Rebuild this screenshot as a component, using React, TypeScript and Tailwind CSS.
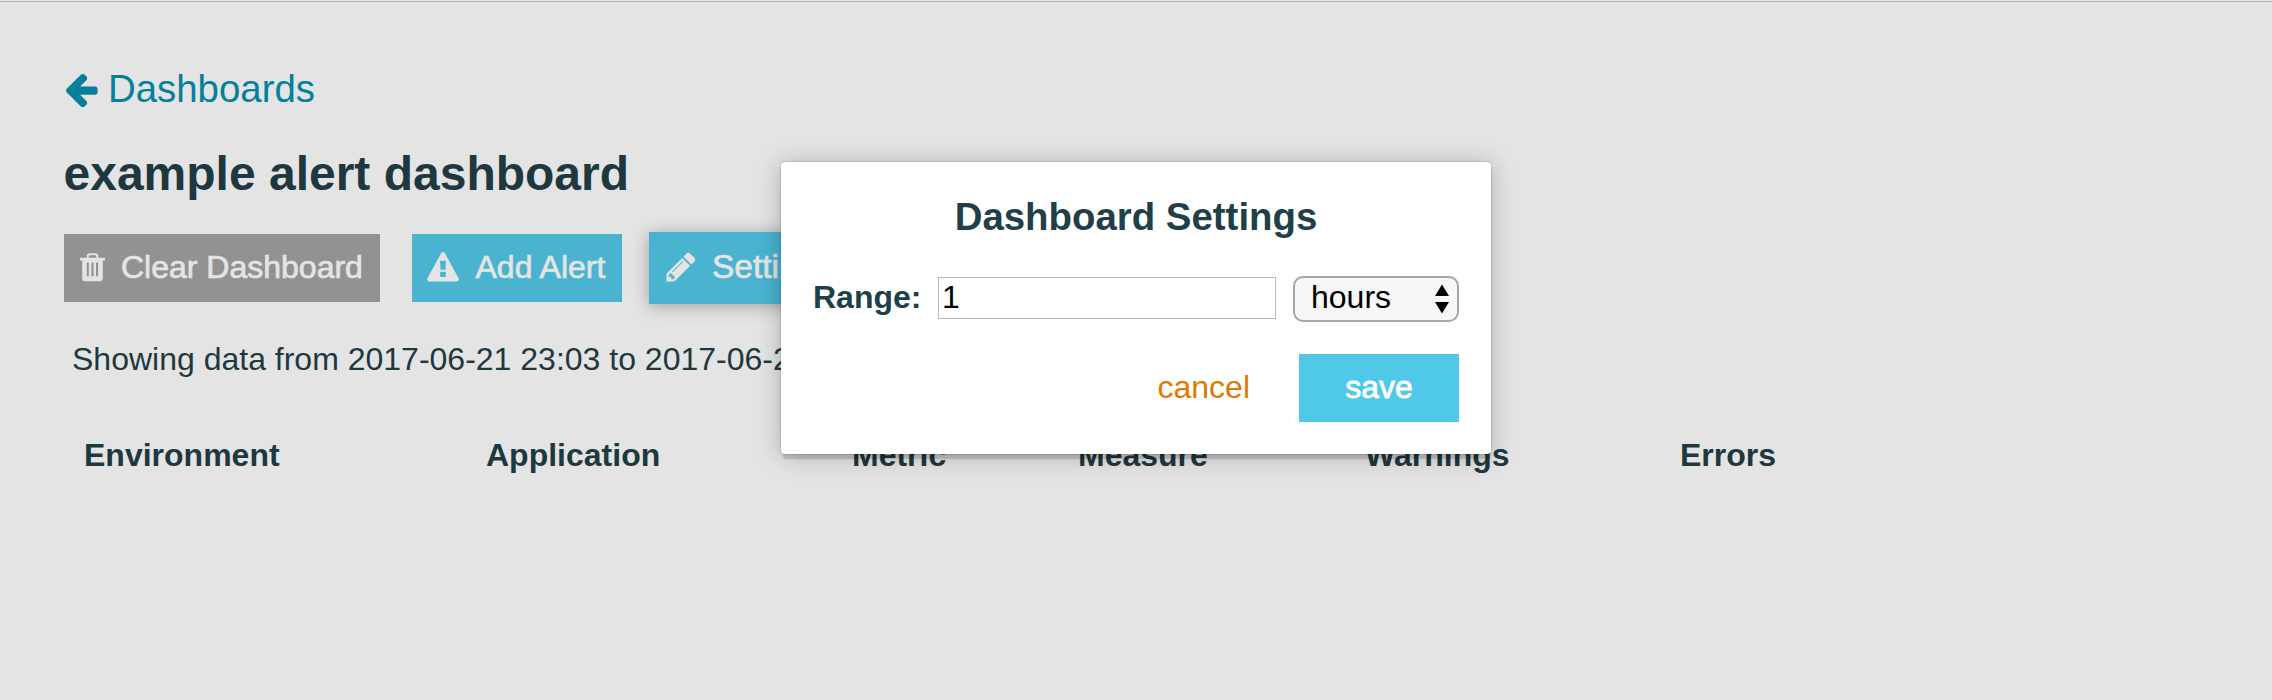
import React from "react";

function Icon({ d, className, viewBox = "0 0 1792 1792" }: { d: string; className: string; viewBox?: string }) {
  return (
    <svg viewBox={viewBox} className={className} fill="currentColor" fillRule="evenodd">
      <path d={d} />
    </svg>
  );
}

const ARROW_LEFT =
  "M1664 896v128q0 53-32.5 90.5t-84.5 37.5h-704l293 294q38 36 38 90t-38 90l-75 76q-37 37-90 37-52 0-91-37l-651-652q-37-37-37-90 0-52 37-91l651-650q38-38 91-38 52 0 90 38l75 74q38 38 38 91t-38 91l-293 293h704q52 0 84.5 37.5t32.5 90.5z";
const TRASH =
  "M0.400 4.700H6.700V3.200Q6.700 0.200 9.700 0.200H15.300Q18.300 0.200 18.300 3.200V4.700H24.600Q25 4.700 25 5.100V7.200Q25 7.600 24.600 7.600H22.800V25.200Q22.800 28.200 19.800 28.200H5.200Q2.200 28.200 2.200 25.200V7.600H0.400Q0 7.600 0 7.200V5.100Q0 4.700 0.400 4.700ZM8.700 4.700H16.300V3.300Q16.300 2.200 15.200 2.200H9.800Q8.700 2.200 8.700 3.300ZM6.800 9.500V23.300H8.800V9.500ZM11.400 9.500V23.300H13.600V9.500ZM16 9.500V23.300H18.100V9.500Z";
const WARNING =
  "M17.800 1.100L31.600 26.300Q32 27.200 31.600 28.200Q31 29.600 29.500 29.600H2.500Q1 29.600 0.400 28.200Q0 27.200 0.400 26.300L14.200 1.100Q15 0 16 0T17.800 1.100ZM13.400 8.800Q13.100 8.800 13.100 9.300L13.500 17.200Q13.500 17.700 14 17.700H18Q18.500 17.700 18.500 17.200L18.900 9.300Q18.900 8.800 18.600 8.800ZM13.700 19.700Q13.200 19.700 13.200 20.200V24.400Q13.200 24.900 13.700 24.900H18.300Q18.800 24.900 18.800 24.400V20.200Q18.800 19.700 18.300 19.700Z";
const PENCIL =
  "M491 1536l91-91-235-235-91 91v107h128v128h107zm523-928q0-22-22-22-10 0-17 7l-542 542q-7 7-7 17 0 22 22 22 10 0 17-7l542-542q7-7 7-17zm-54-192l416 416-832 832h-416v-416zm683 96q0 53-37 90l-166 166-416-416 166-165q36-38 90-38 53 0 91 38l235 234q37 39 37 91z";

function SettingsDialog() {
  return (
    <div
      role="dialog"
      className="absolute left-[781px] top-[161px] flex h-[292px] w-[710px] flex-col rounded-[4px] bg-white px-8 shadow-[0_0_2px_rgba(0,0,0,0.3),1px_6px_1px_-1px_rgba(0,0,0,0.14),0_2px_24px_rgba(0,0,0,0.25)]"
    >
      <h2 className="mt-[33px] text-center text-[38.4px] font-bold leading-[44px] text-[#213f48]">Dashboard Settings</h2>
      <div className="mt-[36px] flex h-[48px] items-center">
        <label className="w-[125px] pb-[4px] text-[32px] font-bold leading-[38px] text-[#213f48]">Range:</label>
        <input
          defaultValue="1"
          className="mb-[2px] h-[42px] w-[338px] border border-[#b8b8b8] bg-white px-[3px] pb-[2px] text-[32px] leading-[38px] text-black outline-none"
        />
        <div className="ml-[17px] flex h-[46px] w-[166px] items-center justify-between rounded-[10px] border-2 border-[#a6a6a6] bg-[#f7f7f7] pl-[16px] pr-[8px] text-[32px] leading-[38px] text-black">
          <span className="pb-[4px]">hours</span>
          <svg viewBox="0 0 14 30" className="h-[30px] w-[14px]">
            <path d="M7 0.500L14 12H0zM7 29.500L14 18H0z" />
          </svg>
        </div>
      </div>
      <div className="mt-[31px] flex items-center justify-end">
        <button className="pb-[2px] text-[32px] leading-[38px] text-[#e07800]">cancel</button>
        <button className="ml-[49px] h-[68px] w-[160px] bg-[#50c8e8] pb-[2px] text-[32px] leading-[38px] text-white [-webkit-text-stroke:0.8px_white]">
          save
        </button>
      </div>
    </div>
  );
}

export default function App() {
  return (
    <div className="relative h-[700px] w-[2272px] overflow-hidden border-t border-[#e4e4e4] bg-[#e4e4e4] font-['Liberation_Sans',Arial,sans-serif] text-[#1e383f] before:block before:h-px before:bg-[#b2b2b2]">
      <a className="ml-[62px] mt-[65px] flex h-[44px] items-center text-[#067f9b]">
        <Icon d={ARROW_LEFT} className="h-[38.4px] w-[38.4px]" />
        <span className="ml-[7.6px] text-[38.4px] leading-[44px]">Dashboards</span>
      </a>
      <h1 className="ml-[63.5px] mt-[35px] text-[48px] font-bold leading-[56px]">example alert dashboard</h1>
      <div className="ml-[64px] mt-[30px] flex h-[72px] items-center text-[32px] leading-[38px] text-[#e4e4e4] [-webkit-text-stroke:0.7px_#e4e4e4]">
        <button className="flex h-[68px] w-[316px] items-center bg-[#929292] pb-[2px] pl-[16px]">
          <Icon d={TRASH} viewBox="0 0 25 29" className="h-[29px] w-[25px]" />
          <span className="ml-[16px] whitespace-nowrap">Clear Dashboard</span>
        </button>
        <button className="ml-[32px] flex h-[68px] w-[210px] items-center bg-[#49b3d0] pb-[2px] pl-[15px]">
          <Icon d={WARNING} viewBox="0 0 32 30" className="h-[30px] w-[32px]" />
          <span className="ml-[16.5px] whitespace-nowrap">Add Alert</span>
        </button>
        <button className="ml-[27px] flex h-[72px] w-[190px] items-center bg-[#49b3d0] pb-[2px] pl-[15px] shadow-[0_2px_16px_rgba(0,0,0,0.3)]">
          <Icon d={PENCIL} className="h-[34px] w-[34px]" />
          <span className="ml-[14px] whitespace-nowrap text-[33.5px]">Settings</span>
        </button>
      </div>
      <p className="ml-[72px] mt-[36px] text-[32px] leading-[38px]">
        Showing data from 2017-06-21 23:03 to 2017-06-22 00:03
      </p>
      <div className="ml-[84px] mt-[58px] grid grid-cols-[402px_366px_226px_287px_315px_200px] text-[32px] font-bold leading-[38px]">
        <span>Environment</span>
        <span>Application</span>
        <span>Metric</span>
        <span>Measure</span>
        <span>Warnings</span>
        <span>Errors</span>
      </div>
      <SettingsDialog />
    </div>
  );
}
